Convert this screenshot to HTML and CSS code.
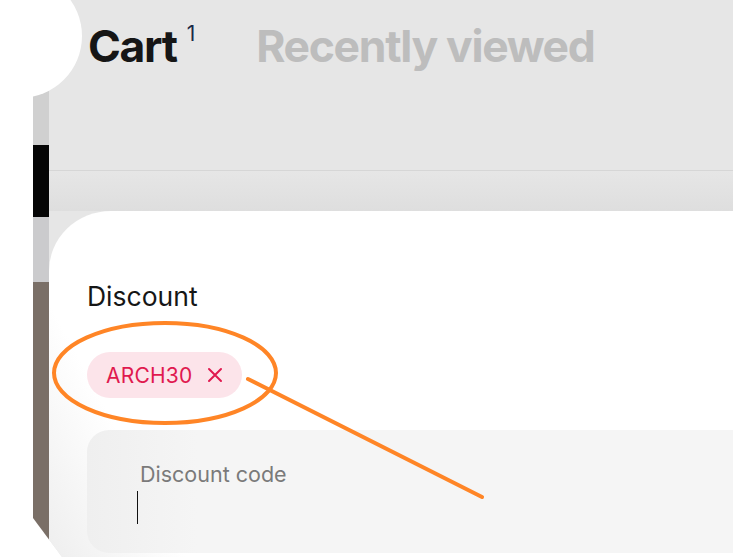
FILE: index.html
```html
<!DOCTYPE html>
<html>
<head>
<meta charset="utf-8">
<link rel="stylesheet" href="styles.css">
</head>
<body>
<div class="frame">
  <div class="strip">
    <div class="seg seg-gray"></div>
    <div class="seg seg-black"></div>
    <div class="seg seg-light"></div>
    <div class="seg seg-brown"></div>
  </div>
  <div class="main">
    <div class="header">
      <span class="tab tab-active">Cart</span>
      <span class="count">1</span>
      <span class="tab tab-idle">Recently viewed</span>
    </div>
    <div class="divider"></div>
    <div class="gap"></div>
    <div class="sheet">
      <div class="title">Discount</div>
      <div class="chips">
        <div class="chip">
          <span class="chip-text">ARCH30</span>
          <svg class="chip-x" width="16" height="16" viewBox="0 0 16 16"><path d="M2 2 L14 14 M14 2 L2 14" stroke="#e0194f" stroke-width="2" stroke-linecap="round" fill="none"/></svg>
        </div>
      </div>
      <div class="field">
        <div class="field-label">Discount code</div>
        <div class="caret"></div>
      </div>
    </div>
  </div>
</div>
<div class="corner"></div>
<svg class="marks" width="733" height="557" viewBox="0 0 733 557">
  <ellipse cx="165" cy="373" rx="111" ry="50" fill="none" stroke="#ff8526" stroke-width="4"/>
  <line x1="248" y1="379" x2="482" y2="497" stroke="#ff8526" stroke-width="4" stroke-linecap="round"/>
</svg>
</body>
</html>
```
FILE: styles.css
```css
html, body {
  margin: 0;
  padding: 0;
  background: #ffffff;
  font-family: Inter, "Noto Sans", "Liberation Sans", sans-serif;
  overflow: hidden;
}
body {
  width: 733px;
  height: 557px;
  position: relative;
}
.frame {
  margin-left: 33px;
  width: 700px;
  height: 557px;
  display: flex;
  clip-path: polygon(0 0, 100% 0, 100% 100%, 29px 100%, 0 518px);
}
.strip {
  width: 16px;
  display: flex;
  flex-direction: column;
}
.seg-gray { height: 145px; background: #d0d0d0; }
.seg-black { height: 72px; background: #050505; }
.seg-light { height: 65px; background: #cbcbcd; }
.seg-brown { flex: 1; background: #7a6f67; }
.main {
  flex: 1;
  display: flex;
  flex-direction: column;
  background: #e6e6e6;
  min-width: 0;
}
.header {
  height: 170px;
  box-sizing: border-box;
  padding: 24px 0 0 39px;
  display: flex;
  align-items: flex-start;
}
.tab {
  font-size: 44.5px;
  font-weight: 700;
  letter-spacing: -0.03em;
  line-height: 1;
}
.tab-active { color: #161616; }
.tab-idle { color: #bdbdbd; margin-left: 61px; }
.count {
  font-size: 21px;
  line-height: 1;
  color: #1b2947;
  margin: -1px 0 0 10px;
}
.divider {
  height: 1px;
  background: #d6d6d6;
}
.gap {
  height: 40px;
  background: linear-gradient(#e6e6e6, #dedede);
}
.sheet {
  flex: 1;
  background: linear-gradient(62deg, #eeeeee 0px, #ffffff 120px);
  border-top-left-radius: 62px 60px;
  padding: 69px 0 0 38px;
  overflow: hidden;
}
.title {
  font-size: 26.5px;
  line-height: 32px;
  color: #161616;
}
.chips {
  display: flex;
  margin-top: 40px;
}
.chip {
  height: 46px;
  box-sizing: border-box;
  padding: 0 19px 0 19px;
  border-radius: 23px;
  background: #fce4ea;
  display: flex;
  align-items: center;
  gap: 15px;
}
.chip-text {
  font-size: 21px;
  color: #e0194f;
  letter-spacing: 0.01em;
}
.chip-x { display: block; }
.field {
  margin-top: 32px;
  height: 123px;
  width: 700px;
  box-sizing: border-box;
  border-radius: 22px;
  background: linear-gradient(to right, #efefef 0px, #f5f5f5 110px);
  padding: 32px 0 0 53px;
}
.field-label {
  font-size: 21.5px;
  line-height: 25px;
  color: #7a7a7a;
}
.caret {
  margin: 4px 0 0 -3px;
  width: 1px;
  height: 33px;
  background: #111111;
}
.corner {
  position: absolute;
  left: -42px;
  top: -26px;
  width: 124px;
  height: 124px;
  border-radius: 50%;
  background: #ffffff;
}
.marks {
  position: absolute;
  left: 0;
  top: 0;
  pointer-events: none;
}
```
